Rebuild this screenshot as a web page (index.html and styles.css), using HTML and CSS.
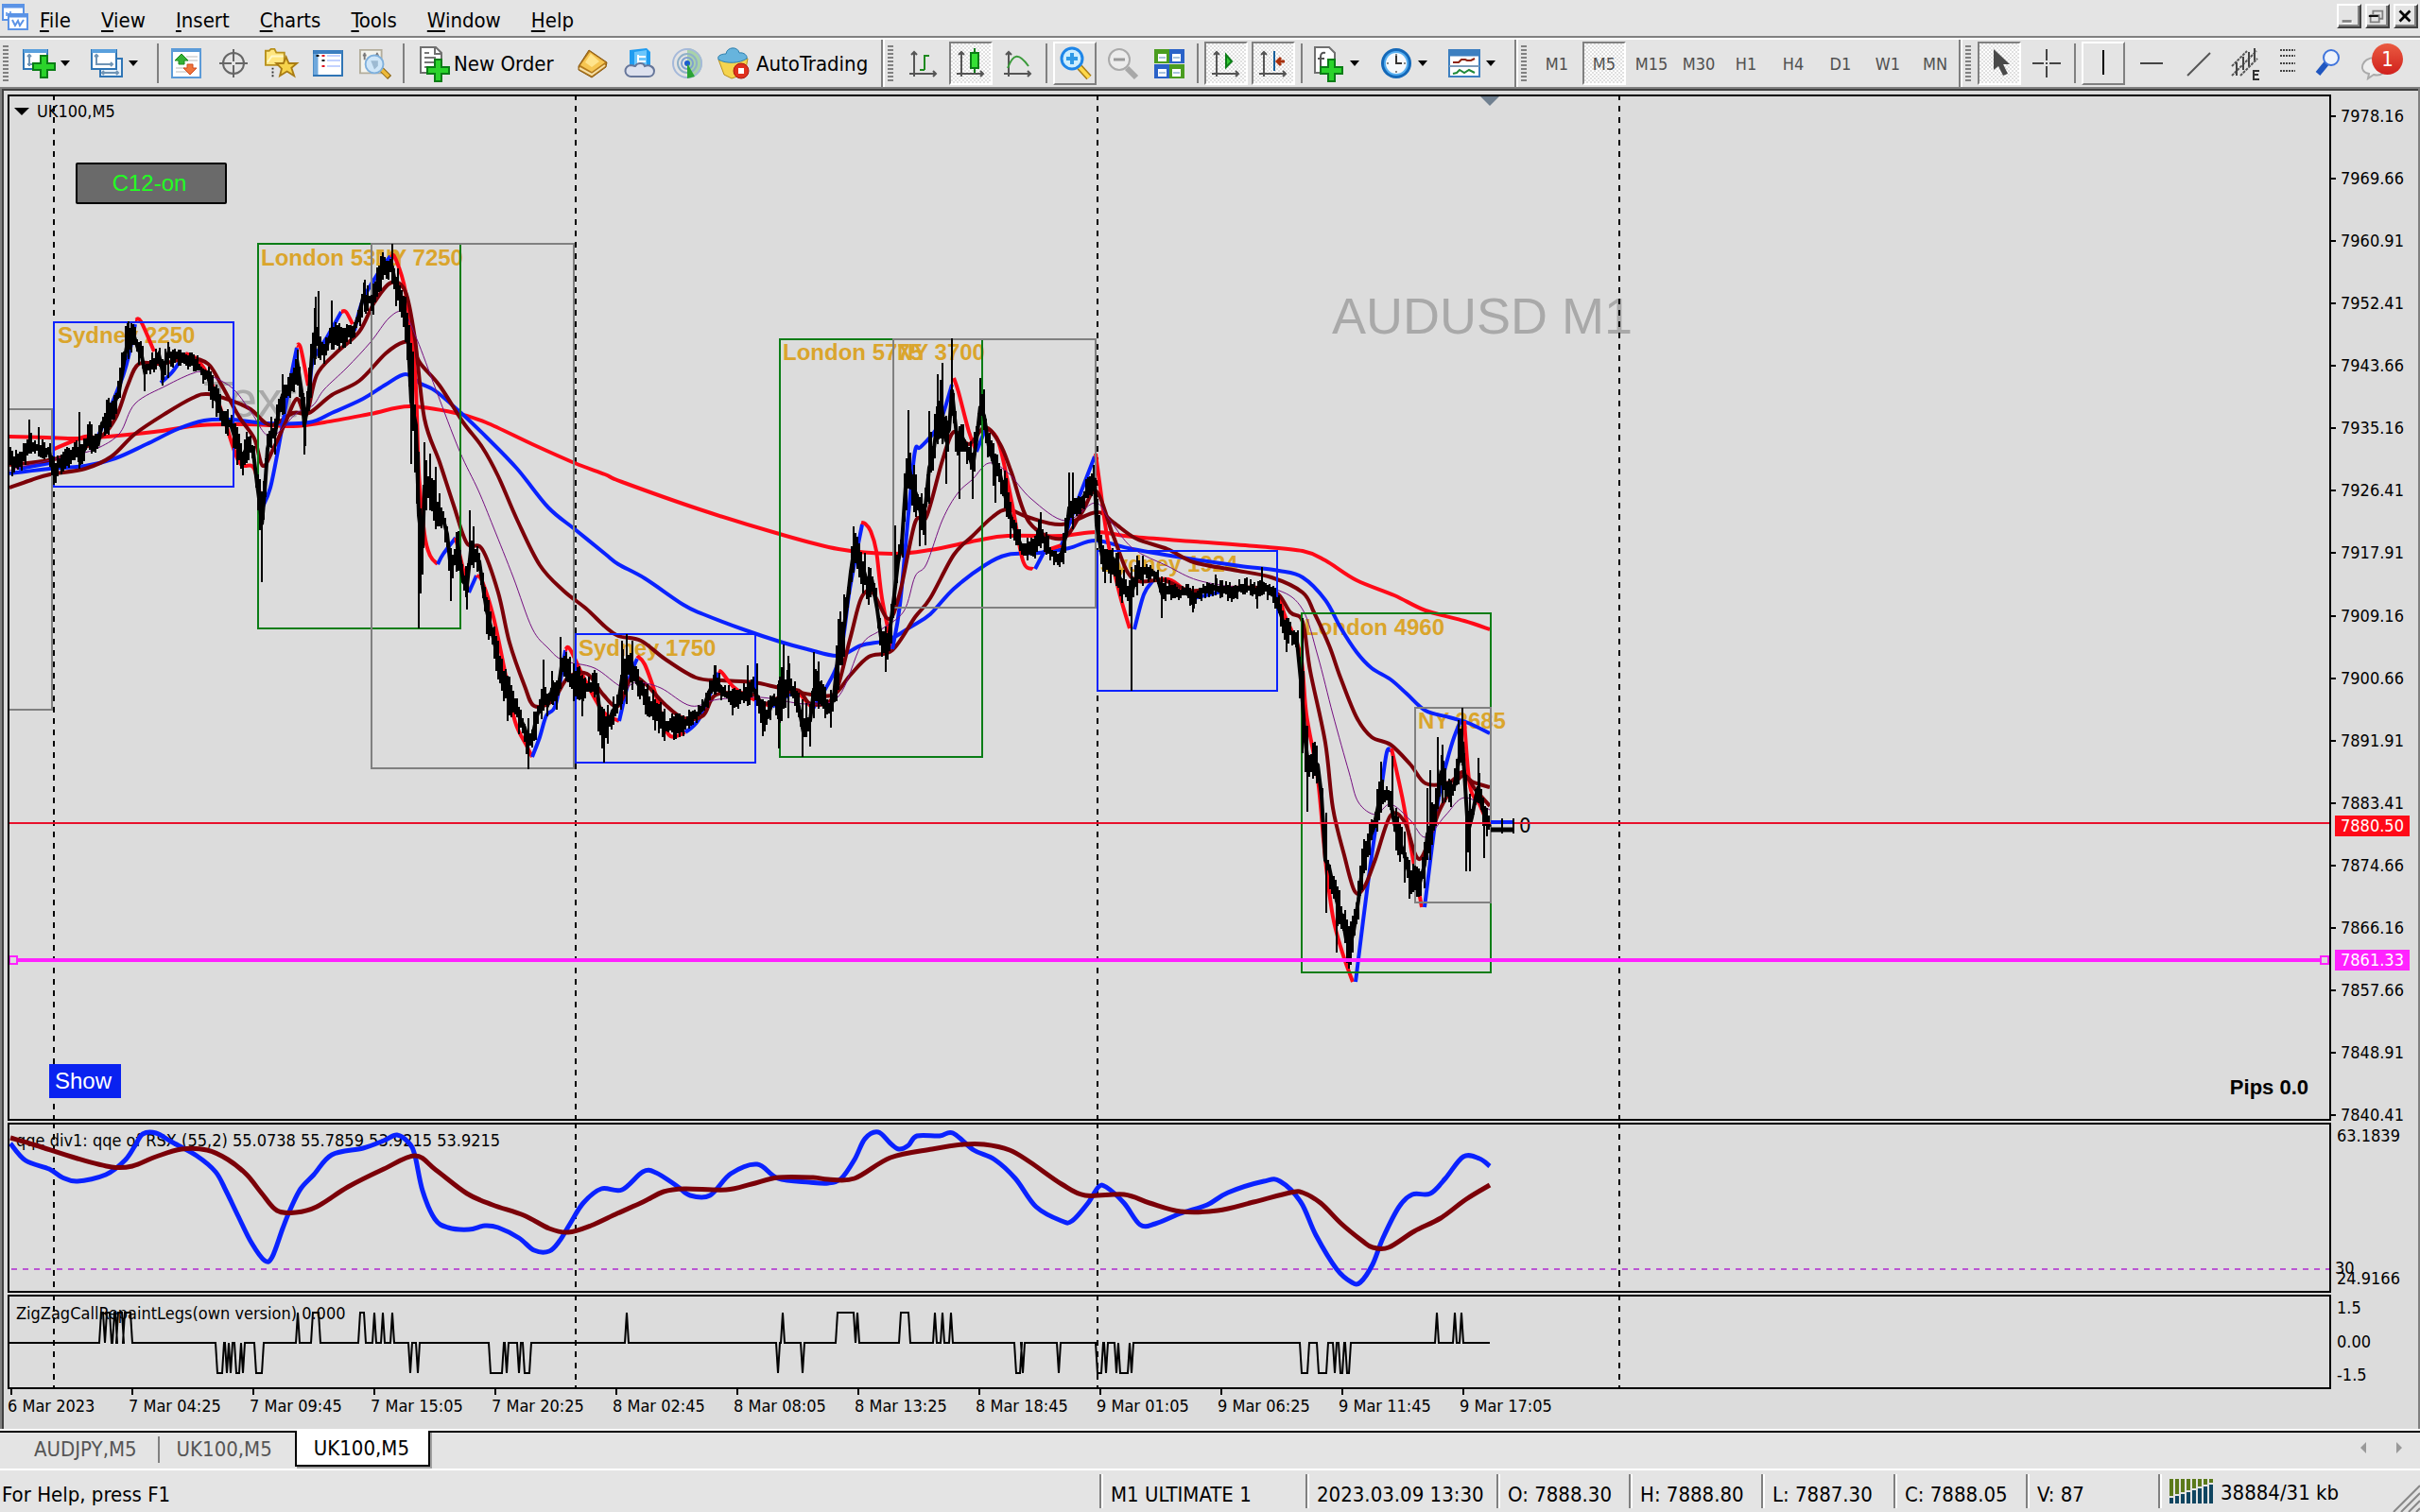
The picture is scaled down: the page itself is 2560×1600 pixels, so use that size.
FILE: index.html
```html
<!DOCTYPE html>
<html lang="en">

<head>
    <meta charset="utf-8">
    <title>UK100,M5</title>
    <link rel="stylesheet" href="styles.css">
</head>

<body>
    <header class="menubar">
        <svg class="appIcon" viewBox="0 0 28 28">
            <rect x="1" y="1" width="22" height="16" fill="#fff" stroke="#5b93e6" stroke-width="2" />
            <path d="M1 3H23" stroke="#5b93e6" stroke-width="3" />
            <path d="M5 9v4M9 8v4M13 10v3" stroke="#7aa9ef" stroke-width="2" />
            <rect x="7" y="11" width="20" height="16" fill="#fff" stroke="#5b93e6" stroke-width="2" />
            <path d="M7 13H27" stroke="#5b93e6" stroke-width="3" />
            <path d="M11 17l3 6 3-5 2 5 4-6" fill="none" stroke="#5b93e6" stroke-width="2" />
        </svg>
        <nav class="menu">
            <button><u>F</u>ile</button>
            <button><u>V</u>iew</button>
            <button><u>I</u>nsert</button>
            <button><u>C</u>harts</button>
            <button><u>T</u>ools</button>
            <button><u>W</u>indow</button>
            <button><u>H</u>elp</button>
        </nav>
        <div class="windowButtons">
            <button aria-label="Minimize"><svg viewBox="0 0 22 22"><path d="M5 18h11" stroke="#fff" stroke-width="3" /><path d="M4 17h11" stroke="#808080" stroke-width="3" /></svg></button>
            <button aria-label="Restore"><svg viewBox="0 0 22 22"><path d="M7 9V5h11v9h-4" fill="none" stroke="#808080" stroke-width="2" /><path d="M4 10h10v8H4z" fill="none" stroke="#808080" stroke-width="2" /><path d="M2 11h11" stroke="#000" stroke-width="2" /></svg></button>
            <button aria-label="Close"><svg viewBox="0 0 22 22"><path d="M5 5l12 12M17 5L5 17" stroke="#000" stroke-width="3" /></svg></button>
        </div>
    </header>

    <div class="toolbars">
        <div class="toolbar toolbarStandard">
            <span class="grip"></span>
            <button class="tool toolDrop" aria-label="New chart">
                <svg viewBox="0 0 34 34"><rect x="1" y="3" width="25" height="20" fill="#fff" stroke="#2f75b5" stroke-width="2" /><path d="M1 4h25" stroke="#5aa0dd" stroke-width="4" /><path d="M7 8v12M5 10l2-2 2 2M5 18h6" fill="none" stroke="#6f94b5" stroke-width="2" /><path d="M19 9h7v8h8v7h-8v8h-7v-8h-8v-7h8z" fill="#2bd32b" stroke="#0a7d16" stroke-width="2" /></svg>
                <i class="arrow"></i>
            </button>
            <button class="tool toolDrop" aria-label="Profiles">
                <svg viewBox="0 0 34 34"><rect x="10" y="12" width="23" height="19" fill="#e9f2fb" stroke="#2f75b5" stroke-width="2" /><rect x="1" y="3" width="26" height="20" fill="#fff" stroke="#2f75b5" stroke-width="2" /><path d="M1 4h26" stroke="#5aa0dd" stroke-width="4" /><path d="M6 8v10h17M4 10l2-2 2 2M21 16l2 2-2 2M12 27h17M14 25l-2 2 2 2M27 25l2 2-2 2" fill="none" stroke="#6f94b5" stroke-width="2" /></svg>
                <i class="arrow"></i>
            </button>
            <span class="separator"></span>
            <button class="tool" aria-label="Market Watch">
                <svg viewBox="0 0 34 34"><rect x="2" y="2" width="30" height="30" fill="#fff" stroke="#5b9bd8" stroke-width="2" /><path d="M2 3h30" stroke="#5b9bd8" stroke-width="4" /><path d="M17 10h12M17 14h12M6 22h10M6 26h12" stroke="#ddd" stroke-width="2" /><path d="M12 7l7 7h-4v4H9v-4H5z" fill="#35b135" stroke="#1d8b1d" /><path d="M21 29l7-7h-4v-4h-6v4h-4z" fill="#f0743c" stroke="#cf4a1b" /></svg>
            </button>
            <button class="tool" aria-label="Data Window">
                <svg viewBox="0 0 34 34"><circle cx="17" cy="17" r="11" fill="none" stroke="#666" stroke-width="2" /><path d="M17 2v13M17 19v13M2 17h13M19 17h13" stroke="#666" stroke-width="2" /></svg>
            </button>
            <button class="tool" aria-label="Navigator">
                <svg viewBox="0 0 36 34"><path d="M1 19V3h4l2-2h4l2 4h9v14z" fill="#ffe680" stroke="#b8901c" stroke-width="2" /><path d="M3 16l5-7h13" fill="none" stroke="#fff7c8" stroke-width="2" /><path d="M9 22v11" stroke="#333" stroke-width="2" stroke-dasharray="2 2" /><path d="M24 10l3 7h9l-6 5 3 9-8-5-8 5 2-8-6-6h8z" fill="#f6d34b" stroke="#a97c14" stroke-width="2" /></svg>
            </button>
            <button class="tool" aria-label="Terminal">
                <svg viewBox="0 0 34 34"><rect x="2" y="4" width="30" height="26" fill="#fff" stroke="#2f75b5" stroke-width="2" /><path d="M2 5h30" stroke="#3c7fc0" stroke-width="4" /><path d="M4 7v22" stroke="#6fa8dc" stroke-width="5" /><path d="M16 9h14M16 14h14M16 20h14" stroke="#c3d2ff" stroke-width="2" /><path d="M12 8v2M12 19v2" stroke="#e01020" stroke-width="3" /><path d="M12 13v2M6 8v2" stroke="#111" stroke-width="3" /></svg>
            </button>
            <button class="tool" aria-label="Strategy Tester">
                <svg viewBox="0 0 36 34"><path d="M1 2h24v26H1z" fill="#f4f4ee" stroke="#b3ad9b" stroke-width="2" /><path d="M6 5v8M20 5v8M4 8h4M18 8h4" stroke="#777" stroke-width="2" /><path d="M25 24l9 9" stroke="#8a6412" stroke-width="6" /><path d="M25 24l8 8" stroke="#edb93a" stroke-width="4" /><circle cx="17" cy="18" r="10" fill="#cfe6f8" stroke="#7fb0dc" stroke-width="2" /><path d="M13 14h8v6l-4 4z" fill="#9dbad2" /></svg>
            </button>
            <span class="separator"></span>
            <button class="tool toolNewOrder">
                <svg viewBox="0 0 34 34"><path d="M3 0h16l6 6v21H3z" fill="#fff" stroke="#707070" stroke-width="2" /><path d="M18 0v7h7" fill="none" stroke="#707070" stroke-width="2" /><path d="M7 6h5M7 11h12M7 16h10M7 21h7" stroke="#777" stroke-width="2" /><path d="M18 13h7v8h8v7h-8v8h-7v-8h-8v-7h8z" fill="#2bd32b" stroke="#0a7d16" stroke-width="2" /></svg>
                <span>New Order</span>
            </button>
            <button class="tool" aria-label="MetaEditor">
                <svg viewBox="0 0 34 34"><path d="M2 20L13 3l19 13-1 5-15 11-14-8z" fill="#b47a1b" stroke="#8a5a12" stroke-width="1" /><path d="M4 19L14 5l16 11-14 10z" fill="#f6c653" /><path d="M9 16l6-9 9 8-8 6z" fill="#ffe48d" /><path d="M3 22l13 7 14-10" fill="none" stroke="#f5dfa6" stroke-width="2" /></svg>
            </button>
            <button class="tool" aria-label="Virtual Hosting">
                <svg viewBox="0 0 34 34"><path d="M6 3l18-2 4 4v16H6z" fill="#1f9cf0" /><path d="M11 5l13-2v16H11z" fill="#6cc6fb" /><path d="M15 8v12M15 10h8M15 15h8" stroke="#fff" stroke-width="2" /><path d="M8 31a6 6 0 0 1-1-12c3 0 4 1 5 1 2-4 9-4 10 0 5-2 10 1 10 5 0 4-3 6-6 6z" fill="#dde1ee" stroke="#66769a" stroke-width="2" /></svg>
            </button>
            <button class="tool" aria-label="Signals">
                <svg viewBox="0 0 34 34"><path d="M17 1a16 16 0 0 1 0 32z" fill="#a9d3a9" /><circle cx="17" cy="17" r="15" fill="none" stroke="#a5b9da" stroke-width="2" /><circle cx="17" cy="17" r="10" fill="none" stroke="#8fb0c8" stroke-width="2" /><circle cx="17" cy="17" r="6" fill="none" stroke="#7fa0d0" stroke-width="2" /><circle cx="17" cy="17" r="3" fill="#1c5cd0" /><path d="M17 17v16l8-2z" fill="#2aa335" /></svg>
            </button>
            <button class="tool toolAuto">
                <svg viewBox="0 0 34 34"><path d="M2 13l6 16 8 4 14-5 3-16z" fill="#f5d44e" stroke="#b8901c" stroke-width="1" /><path d="M2 13c-2-5 5-6 8-6 1-8 13-8 14-1 5-1 9 3 8 6-7 5-22 6-30 1z" fill="#67b4dd" stroke="#2f80ad" stroke-width="1" /><circle cx="26" cy="25" r="8" fill="#e0301e" stroke="#a91a10" stroke-width="1" /><rect x="23" y="22" width="6" height="6" fill="#fff" /></svg>
                <span>AutoTrading</span>
            </button>
        </div>

        <div class="toolbar toolbarCharts">
            <span class="grip"></span>
            <button class="tool" aria-label="Bar Chart">
                <svg viewBox="0 0 34 34"><path class="axes" d="M7 5v26M2 28h28M4 8l3-3 3 3M27 25l3 3-3 3" /><path d="M18 24V9h5M13 24h5" fill="none" stroke="#1e8a1e" stroke-width="2" /></svg>
            </button>
            <button class="tool toolPressed" aria-label="Candlesticks">
                <svg viewBox="0 0 34 34"><path class="axes" d="M7 5v26M2 28h28M4 8l3-3 3 3M27 25l3 3-3 3" /><path d="M21 1v26" stroke="#0a7d16" stroke-width="2" /><rect x="17" y="6" width="8" height="16" fill="#35e035" stroke="#0a7d16" stroke-width="2" /></svg>
            </button>
            <button class="tool" aria-label="Line Chart">
                <svg viewBox="0 0 34 34"><path class="axes" d="M7 5v26M2 28h28M4 8l3-3 3 3M27 25l3 3-3 3" /><path d="M6 22C12 6 18 6 28 20" fill="none" stroke="#3a9a3a" stroke-width="2" /></svg>
            </button>
            <span class="separator"></span>
            <button class="tool toolRaised" aria-label="Zoom In">
                <svg viewBox="0 0 34 34"><path d="M22 21l10 11" stroke="#a97c14" stroke-width="7" /><path d="M22 21l10 11" stroke="#ffd84a" stroke-width="4" /><circle cx="14" cy="12" r="11" fill="#cdeeff" stroke="#1e86e8" stroke-width="3" /><path d="M14 6v12M8 12h12" stroke="#2f9ae6" stroke-width="4" /></svg>
            </button>
            <button class="tool" aria-label="Zoom Out">
                <svg viewBox="0 0 34 34"><path d="M22 22l10 10" stroke="#a8a8a8" stroke-width="6" /><circle cx="14" cy="13" r="11" fill="#ececec" stroke="#aaa" stroke-width="2" /><path d="M8 13h12" stroke="#999" stroke-width="3" /></svg>
            </button>
            <button class="tool" aria-label="Tile Windows">
                <svg viewBox="0 0 34 34"><path d="M1 2h16v15H1zM17 18h16v15H17z" fill="#4a9d1f" /><path d="M17 2h16v15H17zM1 18h16v15H1z" fill="#2a62c8" /><path d="M5 7h9v8H5zM20 7h9v8h-9zM5 23h9v8H5zM20 23h9v8h-9z" fill="#fff" /><path d="M6 11h7M21 11h7M6 27h7M21 27h7" stroke="#a9c4de" stroke-width="2" /></svg>
            </button>
            <span class="separator"></span>
            <button class="tool toolPressed" aria-label="Auto Scroll">
                <svg viewBox="0 0 34 34"><path class="axes" d="M7 5v26M2 28h28M4 8l3-3 3 3M27 25l3 3-3 3" /><path d="M17 8v13l6-6z" fill="#35c935" stroke="#0a7d16" stroke-width="2" /></svg>
            </button>
            <button class="tool toolPressed" aria-label="Chart Shift">
                <svg viewBox="0 0 34 34"><path class="axes" d="M7 5v26M2 28h28M4 8l3-3 3 3M27 25l3 3-3 3" /><path d="M18 4v21" stroke="#17609c" stroke-width="2" /><path d="M21 15h8M25 11l-4 4 4 4" fill="none" stroke="#a8300c" stroke-width="3" /></svg>
            </button>
            <span class="separator"></span>
            <button class="tool toolDrop" aria-label="Indicators">
                <svg viewBox="0 0 34 34"><path d="M3 0h15l6 6v21H3z" fill="#fff" stroke="#707070" stroke-width="2" /><path d="M9 23V10q0-5 5-4M6 12h7" fill="none" stroke="#555" stroke-width="2" /><path d="M17 13h7v8h8v7h-8v8h-7v-8H9v-7h8z" fill="#2bd32b" stroke="#0a7d16" stroke-width="2" /></svg>
                <i class="arrow"></i>
            </button>
            <button class="tool toolDrop" aria-label="Periods">
                <svg viewBox="0 0 34 34"><circle cx="17" cy="17" r="16" fill="#1468b8" /><circle cx="17" cy="17" r="13" fill="#55aef0" /><circle cx="17" cy="17" r="11" fill="#f4f8fc" /><path d="M17 9v8h6" fill="none" stroke="#333" stroke-width="2" /><path d="M17 7v2M17 25v2M7 17h2M25 17h2" stroke="#888" stroke-width="2" /></svg>
                <i class="arrow"></i>
            </button>
            <button class="tool toolDrop" aria-label="Templates">
                <svg viewBox="0 0 34 34"><rect x="1" y="3" width="32" height="28" fill="#fff" stroke="#3c7fc0" stroke-width="2" /><path d="M1 6h32" stroke="#3c7fc0" stroke-width="7" /><path d="M1 20h32" stroke="#7c9ab8" stroke-width="2" /><path d="M5 16h6l3-3h4l2 1h4l4-2" fill="none" stroke="#8e2410" stroke-width="2" /><path d="M5 28l4-1 3-3 5 3 5-3 6 3" fill="none" stroke="#1f8a3a" stroke-width="2" /></svg>
                <i class="arrow"></i>
            </button>
        </div>

        <div class="toolbar toolbarPeriods">
            <span class="grip"></span>
            <button class="tool">M1</button>
            <button class="tool toolPressed">M5</button>
            <button class="tool">M15</button>
            <button class="tool">M30</button>
            <button class="tool">H1</button>
            <button class="tool">H4</button>
            <button class="tool">D1</button>
            <button class="tool">W1</button>
            <button class="tool">MN</button>
        </div>

        <div class="toolbar toolbarLine">
            <span class="grip"></span>
            <button class="tool toolPressed" aria-label="Cursor">
                <svg viewBox="0 0 34 34"><path d="M11 2v22l5-4 5 10 5-2-5-10h7z" fill="#4a4a4a" /></svg>
            </button>
            <button class="tool" aria-label="Crosshair">
                <svg viewBox="0 0 34 34"><path d="M17 2v12M17 20v12M2 17h12M20 17h12M16 17h2" stroke="#444" stroke-width="2" /></svg>
            </button>
            <span class="separator"></span>
            <button class="tool toolRaised" aria-label="Vertical Line">
                <svg viewBox="0 0 34 34"><path d="M17 3v26" stroke="#000" stroke-width="2" /></svg>
            </button>
            <button class="tool" aria-label="Horizontal Line">
                <svg viewBox="0 0 34 34"><path d="M6 17h24" stroke="#444" stroke-width="2" /></svg>
            </button>
            <button class="tool" aria-label="Trendline">
                <svg viewBox="0 0 34 34"><path d="M6 30L30 6" stroke="#555" stroke-width="2" /></svg>
            </button>
            <button class="tool" aria-label="Equidistant Channel">
                <svg viewBox="0 0 34 34"><path d="M3 20L19 4M3 30L29 4M12 30L30 12" stroke="#555" stroke-width="2" stroke-dasharray="3 1" /><path d="M8 16v14M15 10v14M21 5v15M27 1v13" stroke="#444" stroke-width="2" /><path d="M32 25h-6v9h6M26 29h5" fill="none" stroke="#333" stroke-width="2" /></svg>
            </button>
            <button class="tool toolNarrow" aria-label="Fibonacci Retracement">
                <svg viewBox="0 0 34 34"><path d="M9 3h16M9 9h16M9 17h16M9 25h16" stroke="#444" stroke-width="2" stroke-dasharray="2 1" /></svg>
            </button>
            <button class="tool" aria-label="Search">
                <svg viewBox="0 0 34 34"><path d="M13 17L4 28" stroke="#1f56c0" stroke-width="6" /><circle cx="18" cy="11" r="8" fill="#eef3fb" stroke="#3f74dc" stroke-width="2" /></svg>
            </button>
            <button class="tool toolChat" aria-label="Notifications">
                <svg viewBox="0 0 34 34"><path d="M14 11c-14 0-18 15-6 17l-1 5 6-4c8 2 14-3 12-10z" fill="#eee" stroke="#aaa" stroke-width="2" /></svg>
                <span class="badge">1</span>
            </button>
        </div>
    </div>

    <main class="chart">
        <section class="pane">
            <div class="labels" id="mainLabels"></div>
            <svg class="plot" id="mainPlot" viewBox="10 102 2454 1082" preserveAspectRatio="none"></svg>
            <button class="chartButton c12">C12-on</button>
            <button class="chartButton show">Show</button>
            <span class="pips">Pips 0.0</span>
        </section>
        <div class="scale scaleMain" id="priceScale">
            <span class="tag tagPrice">7880.50</span>
            <span class="tag tagLevel">7861.33</span>
        </div>

        <section class="pane">
            <div class="labels" id="qqeLabels"></div>
            <svg class="plot" id="qqePlot" viewBox="10 1190 2454 176" preserveAspectRatio="none"></svg>
        </section>
        <div class="scale">
            <span>63.1839</span>
            <span class="threshold">30</span>
            <span>24.9166</span>
        </div>

        <section class="pane">
            <div class="labels" id="zigLabels"></div>
            <svg class="plot" id="zigPlot" viewBox="10 1372 2454 96" preserveAspectRatio="none"></svg>
        </section>
        <div class="scale">
            <span>1.5</span>
            <span>0.00</span>
            <span>-1.5</span>
        </div>

        <div class="timeScale" id="timeScale"></div>
    </main>

    <nav class="tabs">
        <button class="tab tabFirst">AUDJPY,M5</button>
        <button class="tab">UK100,M5</button>
        <button class="tab tabActive">UK100,M5</button>
        <div class="tabArrows">
            <button aria-label="Scroll left"><svg viewBox="0 0 8 12"><path d="M7 0v12L1 6z" fill="#999" /></svg></button>
            <button aria-label="Scroll right"><svg viewBox="0 0 8 12"><path d="M1 0v12l6-6z" fill="#999" /></svg></button>
        </div>
    </nav>

    <footer class="status">
        <span class="cell cellHelp">For Help, press F1</span>
        <span class="cell cellProfile">M1 ULTIMATE 1</span>
        <span class="cell cellTime">2023.03.09 13:30</span>
        <span class="cell">O: 7888.30</span>
        <span class="cell">H: 7888.80</span>
        <span class="cell">L: 7887.30</span>
        <span class="cell">C: 7888.05</span>
        <span class="cell">V: 87</span>
        <span class="cell cellTraffic">
            <svg viewBox="0 0 46 26">
                <path d="M2 0v18M8 0v16M14 0v14M20 0v12M26 0v10M32 0v8M38 0v6M44 0v4" stroke="#5b7a1a" stroke-width="4" />
                <path d="M2 26v-6M8 26v-8M14 26v-10M20 26v-12M26 26v-14M32 26v-16M38 26v-18M44 26v-20" stroke="#0f4560" stroke-width="4" />
            </svg>
            38884/31 kb
        </span>
        <svg class="sizeGrip" viewBox="0 0 30 30"><path d="M2 30L30 2M10 30L30 10M18 30L30 18M26 30L30 26" stroke="#888" stroke-width="2" /></svg>
    </footer>

    <script src="chart.js"></script>
</body>

</html>
```
FILE: styles.css
```css
* {
    box-sizing: border-box;
}

body {
    margin: 0;
    height: 100vh;
    display: flex;
    flex-direction: column;
    overflow: hidden;
    background-color: #e4e4e4;
    color: black;
    font-family: "DejaVu Sans Condensed", "DejaVu Sans", sans-serif;
    font-size: 22px;
}

button {
    border: none;
    background: none;
    padding: 0;
    margin: 0;
    color: inherit;
    font: inherit;
}

/* menu */
.menubar {
    height: 42px;
    flex: none;
    display: flex;
    align-items: flex-start;
    padding: 4px 2px 0 2px;
    border-bottom: 2px solid white;
    box-shadow: inset 0 -2px #808080;
}

.appIcon {
    width: 28px;
    height: 28px;
}

.menu {
    display: flex;
    flex: 1;
    margin-top: 6px;
    padding-left: 12px;
    gap: 32px;
}

.menu button {
    line-height: 24px;
}

.menu u {
    text-underline-offset: 3px;
    text-decoration-thickness: 2px;
}

.windowButtons {
    display: flex;
    gap: 4px;
}

.windowButtons button {
    width: 26px;
    height: 26px;
    border: 2px solid;
    border-color: white #404040 #404040 white;
    box-shadow: inset -2px -2px #808080;
}

.windowButtons svg {
    display: block;
    width: 20px;
    height: 20px;
}

/* toolbars */
.toolbars {
    height: 50px;
    flex: none;
    display: flex;
}

.toolbar {
    display: flex;
    align-items: center;
    border-left: 2px solid white;
    border-right: 2px solid #808080;
}

.toolbarStandard {
    width: 934px;
    border-left: none;
}

.toolbarCharts {
    padding-right: 4px;
}

.toolbarLine {
    flex: 1;
    border-right: none;
}

.grip {
    width: 16px;
    height: 38px;
    flex: none;
    background: repeating-linear-gradient(#808080 0 2px, transparent 2px 4px) 3px 0 / 6px 100% no-repeat;
}

.toolbarStandard .grip {
    width: 18px;
}

.toolbarLine .grip {
    width: 14px;
}

.separator {
    width: 2px;
    height: 42px;
    flex: none;
    margin: 0 4px;
    background-color: #808080;
}

.tool {
    width: 46px;
    height: 46px;
    flex: none;
    margin: 0 2px;
    display: flex;
    align-items: center;
    justify-content: center;
    position: relative;
    border: 2px solid transparent;
}

.tool svg {
    width: 34px;
    height: 34px;
    flex: none;
    overflow: visible;
}

.axes {
    fill: none;
    stroke: #555;
    stroke-width: 2;
}

.toolNarrow {
    width: 36px;
}

.toolDrop {
    width: 68px;
    justify-content: flex-start;
    padding-left: 2px;
    gap: 6px;
}

.arrow {
    border: 5px solid transparent;
    border-top: 6px solid black;
    border-bottom: none;
}

.toolNewOrder {
    width: 166px;
    justify-content: flex-start;
    padding-left: 6px;
    gap: 4px;
}

.toolAuto {
    width: auto;
    gap: 8px;
    padding-left: 2px;
}

.toolPressed {
    border-color: #808080 white white #808080;
    background: conic-gradient(#e0e0e0 25%, white 0 50%, #e0e0e0 0 75%, white 0) 0 0 / 4px 4px;
}

.toolRaised {
    border-color: white #808080 #808080 white;
}

.toolbarPeriods {
    color: #505050;
    font-size: 18px;
}

.badge {
    position: absolute;
    right: -6px;
    top: 0;
    width: 33px;
    height: 33px;
    border-radius: 50%;
    background: linear-gradient(#ea5b41, #d0201c);
    color: white;
    line-height: 33px;
    text-align: center;
}

/* chart window */
.chart {
    flex: 1;
    min-height: 0;
    display: grid;
    grid-template-columns: minmax(0, 1fr) 92px;
    grid-template-rows: minmax(0, 1fr) 180px 100px 40px;
    row-gap: 2px;
    padding: 4px 0 0 4px;
    margin: 2px 2px 0 2px;
    border: solid #404040;
    border-width: 2px 0 0 2px;
    outline: 2px solid #808080;
    background-color: #dcdcdc;
    font-size: 18px;
    line-height: 20px;
}

.pane {
    position: relative;
    border: 2px solid black;
    overflow: hidden;
}

.plot {
    position: absolute;
    inset: 0;
    width: 100%;
    height: 100%;
}

.plot path {
    fill: none;
}

.plot .day {
    stroke: black;
    stroke-width: 2;
    stroke-dasharray: 6 6;
    stroke-dashoffset: 2;
}

.plot .sydney { stroke: #0a22ff; stroke-width: 2; }
.plot .london { stroke: #0a7d16; stroke-width: 2; }
.plot .ny { stroke: #808080; stroke-width: 2; }

.plot .candles { stroke: black; stroke-width: 2; }
.plot .priceLine { stroke: black; stroke-width: 4; }
.plot .position { stroke: black; stroke-width: 5; }
.plot .red { stroke: #ff0a18; stroke-width: 4; }
.plot .blue { stroke: #0a22ff; stroke-width: 4; }
.plot .maroon { stroke: #7b0008; stroke-width: 4; }
.plot .purple { stroke: #750f80; stroke-width: 1; }
.plot .bid { stroke: #e8112c; stroke-width: 2; }
.plot .level { stroke: #ff22ff; stroke-width: 4; }
.plot .levelHandle { fill: #dcdcdc; stroke: #ff22ff; stroke-width: 2; }
.plot .limit { stroke: #ba55d3; stroke-width: 2; stroke-dasharray: 6 6; }
.plot .shift { fill: #708090; }
.plot .menuMark { fill: black; }

#qqePlot .blue,
#qqePlot .maroon {
    stroke-width: 5;
}

.label {
    position: absolute;
    white-space: nowrap;
    transform: translateY(-50%);
}

.session {
    color: #daa52c;
    font: bold 24px "Liberation Sans", Arial, sans-serif;
}

.watermark {
    color: #a9a9a9;
    font: 54px "Liberation Sans", Arial, sans-serif;
}

.count {
    font-size: 22px;
}

.chartButton {
    position: absolute;
    font: 24px "Liberation Sans", Arial, sans-serif;
}

.c12 {
    left: 70px;
    top: 70px;
    width: 160px;
    height: 44px;
    padding-right: 4px;
    border: 2px solid black;
    border-radius: 2px;
    background-color: #6a6a6a;
    color: #22ff22;
}

.show {
    left: 42px;
    bottom: 22px;
    width: 76px;
    height: 36px;
    padding-right: 4px;
    background-color: #0a22f0;
    color: white;
}

.pips {
    position: absolute;
    right: 22px;
    bottom: 20px;
    font: bold 22px "Liberation Sans", Arial, sans-serif;
}

/* value scales */
.scale {
    position: relative;
    display: flex;
    flex-direction: column;
    justify-content: space-between;
    padding: 4px 0 5px 6px;
}

.scaleMain {
    padding: 13px 0 0 0;
    margin-bottom: -4px;
}

.price::before {
    content: "";
    display: inline-block;
    width: 5px;
    height: 2px;
    margin-right: 5px;
    vertical-align: 5px;
    background-color: black;
}

.tag {
    position: absolute;
    left: 4px;
    width: 79px;
    height: 22px;
    padding-left: 6px;
    line-height: 22px;
    color: white;
    transform: translateY(-50%);
}

.tagPrice {
    top: 71%;
    background-color: #ff0a18;
}

.tagLevel {
    top: 84%;
    background-color: #ff22ff;
}

.threshold {
    position: absolute;
    left: 4px;
    top: 144px;
}

.timeScale {
    position: relative;
    grid-column: 1 / -1;
    margin-top: -2px;
}

.time {
    position: absolute;
    top: 8px;
    white-space: nowrap;
}

.time::before {
    content: "";
    position: absolute;
    left: 3px;
    top: -8px;
    width: 2px;
    height: 6px;
    background-color: black;
}

/* chart tabs */
.tabs {
    height: 44px;
    flex: none;
    display: flex;
    align-items: flex-start;
    padding-left: 2px;
    border-top: 2px solid white;
    border-bottom: 2px solid white;
    box-shadow: inset 0 2px black;
    color: #555;
}

.tab {
    height: 38px;
    padding: 0 24px 0 18px;
    position: relative;
}

.tabFirst {
    padding-left: 34px;
}

.tabFirst::after {
    content: "";
    position: absolute;
    right: 0;
    top: 6px;
    width: 2px;
    height: 28px;
    background-color: #808080;
}

.tabActive {
    padding-right: 20px;
    border: 2px solid black;
    border-top: none;
    background-color: white;
    box-shadow: 2px 2px #a0a0a0;
    color: black;
}

.tabArrows {
    margin-left: auto;
    display: flex;
    gap: 30px;
    padding: 12px 18px 0 0;
}

.tabArrows svg {
    display: block;
    width: 8px;
    height: 12px;
}

/* status bar */
.status {
    height: 44px;
    flex: none;
    display: flex;
    align-items: center;
    position: relative;
}

.cell {
    width: 140px;
    height: 36px;
    padding: 4px 0 0 10px;
    line-height: 36px;
    white-space: nowrap;
    border-left: 2px solid #808080;
    box-shadow: inset 2px 0 white;
}

.cellHelp {
    flex: 1;
    padding-left: 2px;
    border: none;
    box-shadow: none;
}

.cellProfile {
    width: 218px;
}

.cellTime {
    width: 202px;
}

.cellTraffic {
    width: 277px;
    display: flex;
    align-items: center;
    gap: 8px;
}

.cellTraffic svg {
    width: 46px;
    height: 26px;
    margin-bottom: 4px;
}

.sizeGrip {
    position: absolute;
    right: 0;
    bottom: 0;
    width: 30px;
    height: 30px;
}
```
FILE: chart.js
```js
const SVG = "http://www.w3.org/2000/svg";

const dayLines = [57, 609, 1161, 1713];

const sessions = [
    ["ny", 0, 433, 55, 751],
    ["sydney", 57, 341, 247, 515],
    ["london", 273, 258, 487, 665],
    ["ny", 393, 258, 607, 813],
    ["sydney", 609, 671, 799, 807],
    ["london", 825, 359, 1039, 801],
    ["ny", 945, 359, 1159, 643],
    ["sydney", 1161, 583, 1351, 731],
    ["london", 1377, 649, 1577, 1029],
    ["ny", 1497, 749, 1577, 955]
];

const mainLabels = [
    ["", 39, 118, "UK100,M5"],
    ["watermark", 215, 422, "Text"],
    ["watermark", 1409, 334, "AUDUSD M1"],
    ["session", 61, 355, "Sydney 2250"],
    ["session", 276, 273, "London 5310"],
    ["session", 397, 273, "NY 7250"],
    ["session", 612, 686, "Sydney 1750"],
    ["session", 828, 373, "London 5775"],
    ["session", 949, 373, "NY 3700"],
    ["session", 1164, 597, "Sydney 1924"],
    ["session", 1380, 664, "London 4960"],
    ["session", 1500, 763, "NY 2685"],
    ["count", 1607, 874, "0"]
];

const prices = ["7978.16", "7969.66", "7960.91", "7952.41", "7943.66", "7935.16", "7926.41", "7917.91", "7909.16",
    "7900.66", "7891.91", "7883.41", "7874.66", "7866.16", "7857.66", "7848.91", "7840.41"];

const times = ["6 Mar 2023", "7 Mar 04:25", "7 Mar 09:45", "7 Mar 15:05", "7 Mar 20:25", "8 Mar 02:45", "8 Mar 08:05",
    "8 Mar 13:25", "8 Mar 18:45", "9 Mar 01:05", "9 Mar 06:25", "9 Mar 11:45", "9 Mar 17:05"];

// moving averages: x,y pairs
const slowRed = "10,462 49,463 82,464 114,462 163,457 212,450 261,449 310,451 343,447 392,438 433,430 482,437 514,447 563,470 608,490 640,502 658,510 740,539 821,564 887,581 944,586 984,582 1033,572 1066,567 1123,567 1160,563 1198,568 1263,573 1329,578 1378,583 1402,593 1435,614 1475,630 1508,646 1549,657 1576,666";
const slowBlue = "10,501 18,500 53,496 90,493 122,485 155,470 188,454 216,445 245,444 282,448 327,447 351,437 384,422 408,407 429,396 445,406 461,414 490,439 514,462 547,496 580,537 608,560 640,586 654,597 682,612 723,640 744,650 789,667 825,679 854,687 887,694 911,683 940,677 964,663 984,650 1009,623 1042,598 1066,587 1099,585 1131,580 1159,572 1198,581 1263,592 1312,599 1353,604 1378,611 1402,635 1418,664 1435,690 1451,707 1471,719 1488,734 1508,752 1533,759 1553,765 1576,776";
const slowMaroon = "10,516 33,508 53,502 90,496 118,483 143,459 176,437 204,421 220,417 245,424 265,433 286,450 310,437 327,437 351,418 380,403 408,374 427,362 435,366 445,385 465,408 490,447 510,473 527,504 547,550 571,598 596,625 620,644 640,663 654,673 678,678 703,697 736,717 764,720 797,722 825,728 858,735 882,735 899,715 919,695 944,688 968,653 984,633 1009,587 1029,567 1050,547 1066,539 1087,547 1123,555 1160,542 1178,553 1202,570 1235,581 1263,595 1304,603 1345,611 1378,627 1390,648 1406,683 1418,717 1435,759 1451,780 1471,788 1492,809 1508,829 1533,828 1547,817 1557,827 1576,833";
const fastMaroon = "10,492 61,485 102,466 122,443 135,408 147,385 171,385 200,379 220,385 233,405 253,441 269,464 278,493 290,473 302,447 314,422 324,439 335,397 355,374 380,351 396,320 414,299 429,309 439,359 449,443 465,489 480,535 494,575 510,581 527,627 539,680 555,726 565,747 584,742 601,717 621,713 638,735 654,747 668,717 682,723 703,745 723,760 744,757 758,735 797,735 809,745 842,730 858,745 882,737 899,677 911,633 923,627 940,655 952,627 968,553 980,547 997,487 1009,457 1025,470 1042,452 1058,470 1070,500 1089,553 1123,570 1144,543 1160,520 1178,568 1198,612 1231,614 1259,625 1296,622 1345,624 1365,648 1378,658 1386,710 1402,786 1410,855 1422,905 1433,943 1443,939 1455,909 1471,863 1486,870 1502,909 1524,855 1547,821 1561,836 1576,853";
const thinPurple = "10,498 20,495 53,487 82,481 106,473 127,458 143,427 176,408 204,395 216,395 245,410 265,435 286,462 314,437 331,429 343,412 367,389 392,362 412,336 427,331 441,359 461,412 486,477 506,519 522,558 543,611 563,665 580,686 596,699 629,707 658,727 674,722 699,728 731,747 760,740 805,738 854,745 887,737 911,683 931,667 956,647 968,610 980,597 997,550 1013,522 1029,507 1046,490 1066,500 1091,528 1127,551 1158,532 1173,549 1198,580 1235,599 1267,614 1312,622 1353,625 1378,645 1394,694 1410,756 1427,817 1437,849 1455,862 1471,851 1492,868 1508,886 1529,863 1549,844 1576,857";

// fast average, coloured by its direction
const trend = [
    ["red", "11,485 20,496"],
    ["blue", "20,496 53,490"],
    ["red", "46,480 90,462 102,466"],
    ["blue", "102,466 131,395 143,343"],
    ["red", "143,339 149,340 163,372"],
    ["blue", "170,405 182,394 196,374"],
    ["red", "196,374 208,380 222,401 237,443 253,489 269,496 277,538"],
    ["blue", "277,538 286,516 296,466 306,408 314,368"],
    ["red", "314,366 318,368 326,408"],
    ["blue", "328,412 331,382 347,355 361,330"],
    ["red", "361,330 366,330 373,343"],
    ["blue", "375,350 384,317 402,286 413,271"],
    ["red", "413,270 418,273 429,309 439,393 443,500 449,565 455,588 463,597"],
    ["blue", "463,597 469,586 482,569"],
    ["red", "482,569 492,611 496,627"],
    ["blue", "496,627 504,609"],
    ["red", "504,609 510,615 522,653 535,715 545,764 557,789 563,801"],
    ["blue", "563,801 571,780 578,757 588,745 598,688"],
    ["red", "598,688 603,687 619,720 638,753 655,763"],
    ["blue", "655,763 666,717 674,697"],
    ["red", "674,694 682,703 693,733 707,777 725,775"],
    ["blue", "725,775 740,760 760,712"],
    ["red", "760,710 764,712 776,727 793,738 817,748"],
    ["blue", "817,748 842,730"],
    ["red", "842,730 860,750"],
    ["blue", "860,750 887,700 899,623 912,555"],
    ["red", "911,553 915,554 921,562 927,583 933,633 944,687"],
    ["blue", "944,687 952,640 962,533 968,477 974,473 993,450 1007,407"],
    ["red", "1009,400 1014,415 1025,457 1033,478"],
    ["blue", "1033,478 1042,455"],
    ["red", "1042,453 1056,467 1070,530 1082,593 1093,602"],
    ["blue", "1095,602 1105,583"],
    ["red", "1105,583 1123,577"],
    ["blue", "1123,577 1140,530 1158,483"],
    ["red", "1159,480 1164,517 1172,573 1184,627 1195,665"],
    ["blue", "1200,666 1210,629 1220,614"],
    ["red", "1220,614 1239,614 1263,633"],
    ["blue", "1263,633 1300,624"],
    ["red", "1300,624 1345,625 1361,656 1376,694 1382,756 1394,824 1402,909 1410,970 1420,1008 1431,1039"],
    ["blue", "1434,1039 1447,935 1461,836 1467,796 1471,794"],
    ["red", "1472,792 1484,847 1494,905 1504,960"],
    ["blue", "1507,960 1522,844 1535,790 1545,763"],
    ["red", "1549,763 1555,832 1565,851 1573,870"]
];

// x, high, low at the turning points of the price
const candles = [
    [10, 476, 498], [14, 478, 504], [24, 470, 496], [30, 458, 482], [40, 466, 482], [52, 470, 486], [56, 480, 514],
    [62, 482, 502], [70, 474, 496], [80, 462, 490], [88, 466, 492], [94, 448, 478], [100, 454, 476], [104, 460, 478],
    [108, 430, 466], [114, 426, 458], [120, 414, 446], [126, 398, 430], [130, 370, 410], [134, 342, 392],
    [138, 341, 374], [142, 346, 366], [146, 358, 380], [150, 366, 388], [153, 374, 411], [158, 376, 398],
    [164, 372, 394], [168, 364, 386], [172, 378, 408], [178, 362, 386], [184, 368, 386], [190, 370, 384],
    [196, 372, 386], [204, 376, 390], [212, 382, 398], [220, 390, 408], [226, 402, 432], [232, 414, 446],
    [238, 432, 462], [244, 440, 458], [250, 450, 486], [256, 466, 504], [262, 460, 482], [268, 464, 494],
    [272, 480, 545], [275, 500, 570], [277, 520, 590], [280, 480, 560], [283, 440, 510], [287, 436, 480],
    [291, 440, 478], [295, 410, 458], [299, 396, 440], [303, 394, 432], [307, 390, 424], [311, 376, 416],
    [315, 366, 408], [319, 396, 432], [322, 420, 480], [326, 410, 442], [330, 340, 410], [334, 320, 380],
    [338, 350, 376], [344, 360, 384], [348, 345, 372], [351, 340, 366], [356, 346, 370], [362, 340, 368],
    [368, 338, 362], [374, 338, 360], [380, 318, 348], [384, 300, 330], [390, 306, 328], [396, 300, 330],
    [400, 280, 310], [406, 268, 300], [411, 270, 298], [415, 268, 298], [418, 278, 320], [422, 290, 332],
    [428, 312, 346], [432, 330, 400], [435, 360, 490], [440, 400, 500], [443, 450, 640], [447, 550, 610],
    [449, 490, 540], [453, 490, 540], [457, 490, 545], [461, 510, 565], [465, 510, 580], [469, 530, 570],
    [473, 550, 580], [477, 580, 625], [481, 570, 610], [485, 562, 600], [490, 596, 635], [494, 600, 640],
    [498, 565, 600], [502, 575, 600], [507, 580, 608], [511, 604, 640], [515, 624, 670], [519, 645, 680],
    [523, 660, 700], [528, 684, 720], [532, 704, 745], [537, 714, 755], [543, 725, 760], [549, 740, 775],
    [555, 755, 785], [559, 765, 805], [563, 765, 795], [568, 735, 780], [572, 735, 760], [575, 715, 752],
    [580, 732, 755], [584, 715, 745], [590, 718, 748], [594, 685, 725], [600, 692, 720], [606, 705, 745],
    [610, 702, 740], [616, 714, 748], [622, 715, 740], [628, 710, 736], [632, 718, 745], [636, 745, 790],
    [640, 750, 796], [644, 750, 780], [648, 740, 765], [654, 735, 755], [658, 690, 745], [663, 680, 725],
    [668, 684, 720], [672, 705, 730], [678, 715, 745], [684, 725, 755], [690, 730, 765], [697, 742, 775],
    [703, 755, 780], [710, 755, 780], [717, 758, 778], [724, 758, 778], [730, 752, 768], [738, 748, 764],
    [744, 740, 758], [750, 720, 745], [756, 706, 735], [762, 718, 735], [768, 724, 745], [774, 732, 750],
    [782, 730, 745], [790, 724, 745], [797, 718, 740], [802, 728, 750], [807, 745, 775], [812, 748, 770],
    [818, 730, 748], [822, 730, 755], [825, 710, 770], [829, 700, 750], [835, 704, 745], [840, 720, 745],
    [845, 735, 760], [849, 750, 790], [853, 748, 782], [857, 745, 780], [861, 710, 750], [866, 715, 745],
    [872, 728, 755], [878, 738, 765], [882, 725, 750], [886, 660, 735], [892, 640, 700], [896, 610, 670],
    [900, 570, 640], [904, 556, 600], [909, 562, 620], [914, 584, 625], [919, 604, 640], [923, 605, 630],
    [928, 630, 660], [932, 660, 690], [936, 670, 700], [941, 650, 690], [946, 600, 660], [950, 580, 610],
    [954, 550, 600], [958, 480, 550], [961, 460, 520], [965, 485, 540], [970, 505, 545], [975, 525, 570],
    [979, 510, 560], [983, 460, 530], [987, 455, 510], [992, 415, 470], [996, 400, 460], [1000, 440, 485],
    [1004, 430, 480], [1007, 375, 450], [1010, 415, 470], [1014, 450, 505], [1019, 450, 480], [1024, 465, 490],
    [1029, 475, 515], [1034, 440, 475], [1037, 410, 450], [1041, 425, 455], [1046, 455, 490], [1052, 470, 515],
    [1058, 485, 520], [1064, 505, 550], [1070, 530, 570], [1076, 550, 585], [1082, 568, 595], [1088, 572, 596],
    [1094, 570, 590], [1099, 548, 575], [1104, 560, 580], [1110, 572, 595], [1116, 580, 596], [1122, 580, 598],
    [1128, 540, 590], [1131, 520, 555], [1136, 525, 545], [1142, 530, 545], [1148, 510, 535], [1154, 500, 528],
    [1158, 492, 520], [1160, 520, 590], [1166, 570, 608], [1172, 578, 618], [1178, 575, 610], [1184, 590, 630],
    [1190, 604, 645], [1196, 610, 655], [1201, 596, 630], [1206, 596, 618], [1212, 594, 616], [1218, 596, 612],
    [1224, 604, 616], [1229, 614, 640], [1235, 616, 630], [1244, 620, 632], [1254, 620, 634], [1262, 624, 642],
    [1272, 618, 632], [1280, 617, 630], [1286, 614, 630], [1296, 618, 632], [1306, 621, 634], [1314, 614, 628],
    [1324, 616, 630], [1330, 620, 634], [1336, 612, 624], [1342, 618, 632], [1348, 624, 638], [1354, 634, 660],
    [1360, 652, 680], [1366, 660, 678], [1372, 667, 690], [1377, 680, 780], [1381, 740, 830], [1384, 770, 850],
    [1390, 785, 825], [1394, 794, 825], [1398, 815, 870], [1402, 870, 950], [1406, 900, 935], [1410, 918, 955],
    [1416, 942, 980], [1420, 955, 985], [1424, 970, 1018], [1428, 980, 1022], [1432, 965, 1005], [1437, 930, 975],
    [1441, 900, 940], [1447, 875, 910], [1453, 865, 888], [1457, 835, 880], [1461, 820, 855], [1466, 835, 850],
    [1471, 838, 855], [1475, 852, 890], [1480, 868, 910], [1486, 885, 925], [1491, 908, 945], [1496, 914, 945],
    [1502, 920, 948], [1507, 890, 940], [1510, 855, 910], [1515, 850, 895], [1520, 830, 870], [1524, 800, 840],
    [1529, 812, 845], [1533, 825, 855], [1538, 820, 848], [1543, 782, 830], [1547, 765, 805], [1550, 815, 850],
    [1553, 855, 905], [1557, 850, 880], [1561, 838, 850], [1564, 815, 850], [1568, 842, 868], [1572, 852, 880],
    [1576, 865, 885]
];

// single long wicks
const wicks = [
    [31, 444, 480], [41, 452, 480], [84, 436, 496], [136, 340, 380], [178, 362, 400], [172, 380, 408], [277, 520, 616],
    [322, 420, 481], [334, 314, 380], [337, 308, 372], [351, 318, 370], [386, 296, 330], [415, 258, 300],
    [443, 500, 665], [449, 468, 540], [455, 480, 540], [461, 494, 560], [477, 580, 636], [497, 540, 600],
    [501, 557, 600], [494, 600, 645], [537, 720, 763], [559, 760, 814], [575, 698, 752], [584, 710, 745],
    [593, 674, 725], [616, 714, 758], [633, 725, 774], [639, 750, 807], [643, 750, 787], [658, 678, 745],
    [663, 671, 745], [669, 678, 730], [703, 750, 783], [756, 704, 735], [775, 730, 757], [791, 704, 745],
    [801, 702, 740], [807, 740, 779], [824, 720, 792], [829, 682, 750], [834, 694, 760], [849, 740, 801],
    [857, 745, 790], [861, 690, 760], [866, 700, 750], [879, 730, 770], [937, 680, 711], [947, 556, 640],
    [961, 434, 500], [973, 540, 578], [979, 540, 577], [983, 435, 500], [992, 396, 470], [997, 384, 470],
    [1001, 440, 512], [1007, 358, 440], [1015, 470, 528], [1029, 480, 528], [1037, 400, 450], [1041, 412, 450],
    [1053, 480, 532], [1101, 542, 580], [1131, 500, 550], [1135, 500, 560], [1197, 600, 731], [1203, 588, 630],
    [1209, 588, 620], [1229, 610, 654], [1262, 620, 648], [1286, 608, 630], [1330, 620, 644], [1335, 600, 630],
    [1361, 655, 690], [1378, 654, 797], [1383, 780, 859], [1403, 860, 966], [1414, 940, 1008], [1427, 980, 1025],
    [1461, 806, 860], [1473, 800, 860], [1481, 870, 912], [1486, 880, 934], [1491, 910, 951], [1510, 834, 910],
    [1513, 815, 910], [1521, 780, 840], [1526, 788, 850], [1543, 762, 830], [1547, 749, 810], [1551, 820, 922],
    [1555, 840, 922], [1564, 802, 850], [1570, 860, 908]
];

const qqeBlue = "11,1210 27,1228 52,1237 66,1246 82,1250 112,1243 132,1228 143,1212 151,1200 165,1199 181,1208 208,1223 228,1240 239,1260 252,1287 266,1315 280,1334 288,1330 299,1300 307,1280 318,1258 332,1243 351,1222 384,1215 406,1207 420,1201 433,1210 439,1223 447,1260 460,1290 474,1299 496,1301 513,1297 527,1299 549,1310 565,1323 581,1324 592,1313 603,1295 617,1273 636,1258 658,1259 680,1240 694,1241 716,1255 730,1265 751,1265 773,1242 801,1232 823,1247 856,1251 876,1252 890,1247 904,1227 915,1205 929,1198 942,1210 951,1216 961,1212 970,1202 994,1202 1008,1199 1030,1217 1052,1227 1074,1247 1096,1277 1123,1292 1134,1292 1151,1273 1162,1256 1170,1256 1189,1273 1206,1296 1222,1295 1249,1284 1277,1275 1299,1262 1337,1250 1354,1250 1376,1272 1392,1307 1414,1343 1430,1357 1439,1357 1452,1338 1463,1310 1480,1277 1494,1264 1513,1263 1529,1247 1548,1224 1565,1226 1576,1234";
const qqeMaroon = "11,1204 38,1212 82,1226 118,1235 140,1234 165,1224 192,1216 219,1217 241,1227 261,1243 277,1263 293,1281 313,1283 335,1277 368,1256 406,1237 439,1223 461,1238 494,1263 521,1275 554,1286 581,1300 601,1304 625,1297 653,1284 680,1272 702,1261 724,1258 768,1259 795,1253 823,1246 860,1246 876,1248 904,1247 942,1225 986,1216 1019,1211 1041,1211 1068,1217 1090,1230 1123,1253 1148,1265 1189,1264 1216,1273 1249,1282 1288,1281 1326,1272 1365,1262 1378,1262 1397,1273 1419,1295 1441,1313 1452,1320 1469,1320 1496,1303 1524,1289 1551,1269 1576,1254";

// zigzag legs: from, to, direction
const legs = [
    [107, 109, 1], [113, 116, 1], [121, 122, 1], [125, 129, 1], [132, 138, 1], [230, 235, -1], [240, 240, -1],
    [244, 244, -1], [250, 253, -1], [257, 257, -1], [271, 277, -1], [315, 315, 1], [331, 337, 1], [381, 385, 1],
    [396, 396, 1], [405, 405, 1], [415, 415, 1], [434, 434, -1], [442, 442, -1], [519, 531, -1], [536, 536, -1],
    [549, 549, -1], [555, 560, -1], [663, 663, 1], [823, 823, -1], [828, 828, 1], [849, 849, -1], [886, 903, 1],
    [907, 907, 1], [953, 961, 1], [989, 989, 1], [997, 997, 1], [1006, 1006, 1], [1075, 1079, -1],
    [1082, 1082, -1], [1120, 1120, -1], [1161, 1165, -1], [1170, 1170, -1], [1181, 1181, -1], [1185, 1193, -1],
    [1197, 1197, -1], [1377, 1383, -1], [1395, 1403, -1], [1412, 1412, -1], [1418, 1420, -1], [1425, 1427, -1],
    [1520, 1520, 1], [1539, 1539, 1], [1546, 1546, 1]
];

function addPath(plot, className, d) {
    const path = document.createElementNS(SVG, "path");
    path.setAttribute("class", className);
    path.setAttribute("d", d);
    plot.appendChild(path);
}

function addLabel(boxId, plot, className, x, y, text) {
    const view = plot.viewBox.baseVal;
    const label = document.createElement("span");
    label.className = "label " + className;
    label.textContent = text;
    label.style.left = (x - view.x) / view.width * 100 + "%";
    label.style.top = (y - view.y) / view.height * 100 + "%";
    document.getElementById(boxId).appendChild(label);
}

function addDays(plot) {
    const view = plot.viewBox.baseVal;
    dayLines.forEach((x) => addPath(plot, "day", `M${x} ${view.y}V${view.y + view.height}`));
}

// smooth line through all points
function curve(text) {
    const points = text.split(" ").map((pair) => pair.split(",").map(Number));
    const at = (i) => points[Math.max(0, Math.min(points.length - 1, i))];
    let d = "M" + points[0];
    for (let i = 0; i < points.length - 1; ++i) {
        const [a, b, c, e] = [at(i - 1), at(i), at(i + 1), at(i + 2)];
        d += `C${b[0] + (c[0] - a[0]) / 6} ${b[1] + (c[1] - a[1]) / 6} ${c[0] - (e[0] - b[0]) / 6} ${c[1] - (e[1] - b[1]) / 6} ${c}`;
    }
    return d;
}

function candlePath() {
    let seed = 7;
    const random = () => (seed = (seed * 16807) % 2147483647) / 2147483647;
    let d = "";
    let i = 0;
    for (let x = 11; x <= 1576; x += 2) {
        while (i < candles.length - 2 && candles[i + 1][0] < x) {
            ++i;
        }
        const [x1, high1, low1] = candles[i];
        const [x2, high2, low2] = candles[i + 1];
        const part = (x - x1) / (x2 - x1);
        const high = high1 + (high2 - high1) * part - 4;
        const low = low1 + (low2 - low1) * part + 4;
        const range = low - high;
        d += `M${x} ${Math.round(high + range * random() * 0.4)}V${Math.round(low - range * random() * 0.4)}`;
    }
    return d;
}

function drawMain() {
    const plot = document.getElementById("mainPlot");
    addDays(plot);
    addPath(plot, "red", curve(slowRed));
    addPath(plot, "blue", curve(slowBlue));
    addPath(plot, "maroon", curve(slowMaroon));
    trend.forEach(([color, points]) => addPath(plot, color, curve(points)));
    addPath(plot, "maroon", curve(fastMaroon));
    addPath(plot, "purple", curve(thinPurple));
    sessions.forEach(([name, x1, y1, x2, y2]) => addPath(plot, name, `M${x1} ${y1}H${x2}V${y2}H${x1}Z`));
    addPath(plot, "priceLine", "M" + candles.map(([x, high, low]) => `${x} ${(high + low) / 2}`).join("L"));
    addPath(plot, "candles", candlePath());
    addPath(plot, "candles", wicks.map(([x, high, low]) => `M${x} ${high}V${low}`).join(""));
    addPath(plot, "bid", "M10 871H2464");
    addPath(plot, "blue", "M1577 870H1601");
    addPath(plot, "position", "M1577 878H1601");
    addPath(plot, "candles", "M1589 866V882M1601 866V882");
    addPath(plot, "level", "M10 1016H2464");
    addPath(plot, "levelHandle", "M10 1012h8v8h-8zM2455 1012h8v8h-8z");
    addPath(plot, "shift", "M1566 102H1586L1576 112Z");
    addPath(plot, "menuMark", "M15 114H31L23 122Z");
    mainLabels.forEach(([name, x, y, text]) => addLabel("mainLabels", plot, name, x, y, text));
}

function drawQqe() {
    const plot = document.getElementById("qqePlot");
    addDays(plot);
    addPath(plot, "limit", "M12 1343H2464");
    addPath(plot, "blue", curve(qqeBlue));
    addPath(plot, "maroon", curve(qqeMaroon));
    addLabel("qqeLabels", plot, "", 17, 1207, "qqe div1: qqe of RSX (55,2) 55.0738 55.7859 53.9215 53.9215");
}

function drawZigZag() {
    const plot = document.getElementById("zigPlot");
    const zero = 1421;
    addDays(plot);
    let d = `M10 ${zero}`;
    legs.forEach(([from, to, direction]) => {
        const y = zero - direction * 32;
        d += `H${from - 2}L${from} ${y}H${to}L${to + 2} ${zero}`;
    });
    addPath(plot, "candles", d + "H1576");
    addLabel("zigLabels", plot, "", 17, 1390, "ZigZagCallRepaintLegs(own version) 0.000");
}

function drawScales() {
    const priceScale = document.getElementById("priceScale");
    prices.forEach((price) => {
        const item = document.createElement("span");
        item.className = "price";
        item.textContent = price;
        priceScale.appendChild(item);
    });

    const timeScale = document.getElementById("timeScale");
    times.forEach((time, index) => {
        const item = document.createElement("span");
        item.className = "time";
        item.textContent = time;
        item.style.left = index * 128 / 2550 * 100 + "%";
        timeScale.appendChild(item);
    });
}

drawMain();
drawQqe();
drawZigZag();
drawScales();
```
